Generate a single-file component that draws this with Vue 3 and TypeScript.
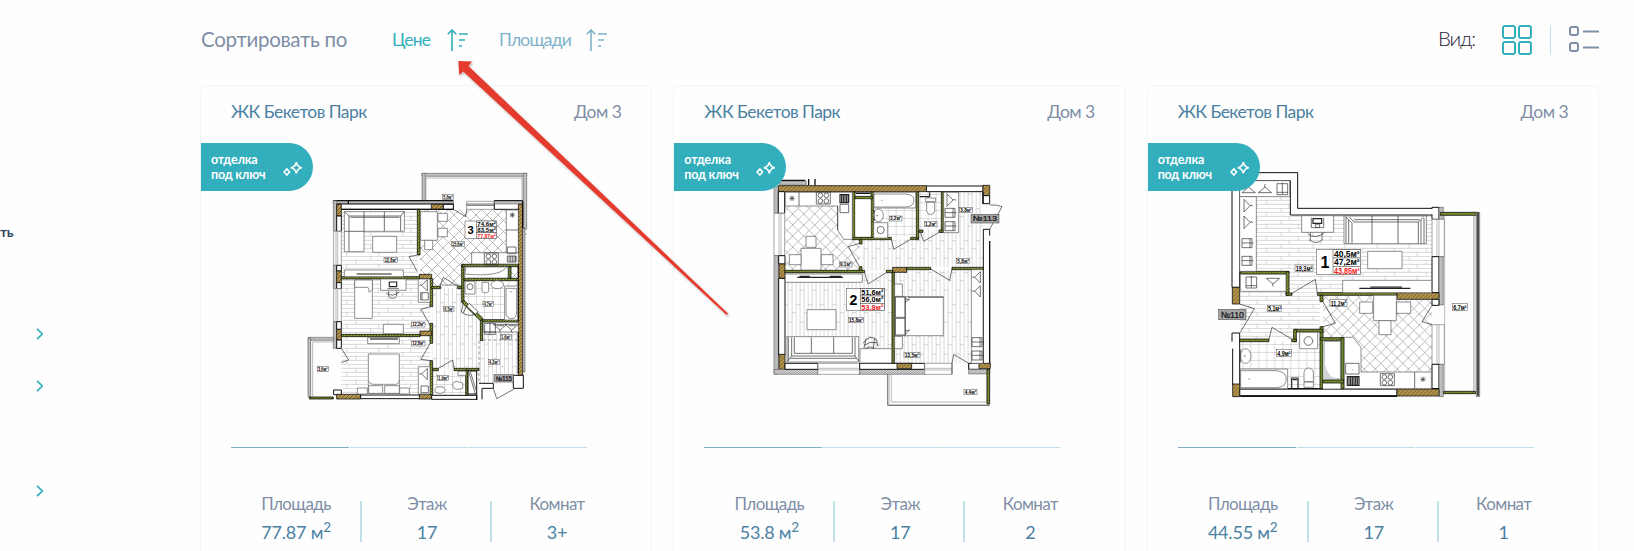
<script setup lang="ts">
type Shape = [kind: string, d: string]
interface Label { t: string; x: number; y: number; w: number; h?: number }
interface Summary { n: string; x: number; y: number; split: number; w: number; h: number; rows: string[] }
interface Plan { box: string; shapes: Shape[]; labels: Label[]; summary: Summary; door: Label }
interface Flat { id: number; area: string; floor: string; rooms: string; plan: Plan }

const fills: Record<string, string> = {
  plank: 'url(#p-plank)', plankv: 'url(#p-plankv)', diag: 'url(#p-diag)', tile: 'url(#p-tile)',
  gold: 'url(#p-gold)', green: 'url(#p-green)', insul: 'url(#p-insul)',
}

// Path builders; one drawing unit is a third of a pixel.
const r = (x1: number, y1: number, x2: number, y2: number) => `M${x1} ${y1}H${x2}V${y2}H${x1}Z`
const circle = (x: number, y: number, a: number, b = a) => `M${x - a} ${y}a${a} ${b} 0 1 0 ${2 * a} 0a${a} ${b} 0 1 0 ${-2 * a} 0Z`
const star = (x: number, y: number) => `M${x - 8} ${y}h16M${x} ${y - 8}v16M${x - 6} ${y - 6}l12 12M${x + 6} ${y - 6}l-12 12`
const hangRight = (x: number, y: number) => `M${x} ${y - 19}L${x + 18} ${y}L${x} ${y + 19}ZM${x + 18} ${y}q8 -5 8 2`
const hangLeft = (x: number, y: number) => `M${x} ${y - 17}L${x - 17} ${y}L${x} ${y + 17}ZM${x - 17} ${y}q-6 -5 -6 2`
const hangUp = (x: number, y: number) => `M${x - 20} ${y}L${x} ${y - 17}L${x + 20} ${y}ZM${x} ${y - 17}q-5 -7 2 -8`
const hangDown = (x: number, y: number) => `M${x - 20} ${y}L${x} ${y + 17}L${x + 20} ${y}ZM${x} ${y + 17}q-5 5 2 7`
const shirt = (x: number, y: number) => `${r(x, y, x + 30, y + 27)}M${x} ${y + 13}h34M${x + 24} ${y}v27`
const shirtUp = (x: number, y: number) => `${r(x, y, x + 32, y + 33)}M${x + 16} ${y - 3}v34M${x} ${y + 26}h32`
const stove = (x: number, y: number) => r(x, y, x + 42, y + 36) + circle(x + 12, y + 10, 7) + circle(x + 30, y + 10, 7) + circle(x + 12, y + 27, 7) + circle(x + 30, y + 27, 7)
const bars = (x1: number, y1: number, x2: number, y2: number) => {
  let d = r(x1, y1, x2, y2)
  for (let x = x1 + 5; x < x2; x += 5) d += `M${x} ${y1}V${y2}`
  return d
}

const planThree: Plan = {
  box: '-297 -51 1350 870',
  shapes: [
    ['plank', r(124, 148, 354, 350)], ['diag', r(360, 148, 655, 378)],
    ['plank', r(124, 357, 391, 523)], ['plank', r(124, 530, 391, 702)],
    ['plankv', 'M398 385H487V425L543 480V486H655V670H537V626H398Z'],
    ['tile', 'M492 363H655V479H545L492 428Z'], ['tile', r(398, 632, 498, 703)],
    ['insul', r(366, 40, 680, 49)], ['insul', r(366, 40, 376, 124)], ['insul', r(669, 40, 680, 205)],
    ['gray', 'M378 122V54H666V122M662 208h20M668 222h14'],
    ['insul', r(100, 122, 460, 132)], ['wall', r(110, 132, 460, 148)], ['gold', r(394, 133, 430, 148)], ['wall', r(430, 133, 460, 148)],
    ['thick', 'M100 122H460M112 148H460M145 122V132M583 122H667'],
    ['window', r(500, 124, 583, 148)], ['thin', 'M500 132H583M500 136H583'], ['wall', r(583, 123, 667, 148)], ['insul', r(583, 123, 667, 132)],
    ['insul', r(100, 122, 110, 213)], ['gold', r(110, 133, 124, 168)], ['wall', r(110, 168, 124, 214)],
    ['window', r(101, 214, 124, 316)], ['gray', 'M108 214V316M113 214V316'],
    ['insul', r(100, 316, 110, 385)], ['wall', r(110, 316, 124, 333)], ['gold', r(110, 333, 124, 368)], ['wall', r(110, 368, 124, 386)],
    ['window', r(101, 386, 124, 485)], ['gray', 'M108 386V485M113 386V485'],
    ['insul', r(100, 485, 110, 565)], ['wall', r(110, 485, 124, 508)], ['gold', r(110, 508, 124, 540)], ['wall', r(110, 540, 124, 565)],
    ['wall', r(101, 690, 124, 704)], ['gold', r(110, 703, 182, 717)], ['wall', r(182, 705, 360, 716)],
    ['gold', r(358, 703, 395, 717)], ['wall', r(395, 706, 530, 718)],
    ['gold', r(655, 133, 668, 646)], ['thick', 'M655 148V640M668 122V636'], ['insul', r(668, 205, 675, 636)],
    ['green', r(352, 148, 360, 285)], ['gold', r(358, 343, 395, 356)], ['green', r(124, 350, 358, 357)],
    ['green', r(390, 356, 398, 440)], ['green', r(390, 490, 398, 550)], ['gold', r(360, 513, 395, 527)], ['green', r(124, 523, 360, 530)],
    ['green', r(390, 602, 398, 705)], ['green', r(395, 379, 422, 386)], ['green', r(472, 379, 487, 386)],
    ['green', r(485, 313, 492, 427)], ['green', r(487, 313, 655, 320)], ['green', r(492, 355, 655, 362)], ['green', r(626, 320, 633, 355)],
    ['furn', r(494, 321, 624, 354)], ['furn', 'M494 354V342Q600 352 620 321M494 342L498 321M422 375H480'],
    ['green', 'M485 427L492 421L548 474V482H541Z'], ['white', 'M500 438L508 430L534 455L526 463Z'], ['thin', 'M500 438L508 430L534 455L526 463ZM490 458L500 438M484 456Q505 472 526 463M490 428L484 456'],
    ['green', r(545, 479, 655, 486)], ['green', r(541, 480, 548, 542)], ['dash', 'M548 540H655M537 542V670'],
    ['green', r(398, 625, 415, 632)], ['green', r(462, 625, 537, 632)], ['green', r(497, 630, 504, 705)],
    ['wall', r(504, 633, 530, 702)], ['thin', 'M506 635L526 702M511 635L528 690'],
    ['wall', 'M537 670H580V685H546V718'], ['wall', r(640, 646, 670, 685)],
    ['thin', 'M580 685L590 716L641 688'], ['thick', 'M530 703V720'],
    ['gray', 'M30 710V538H101M38 710V546H101'], ['insul', r(25, 532, 102, 541)], ['insul', r(24, 534, 32, 710)], ['green', r(28, 711, 100, 717)],
    ['thin', 'M124 565L146 600L124 608'],
    ['thin', 'M390 440L363 448L390 495M390 550L363 598L391 602M415 625L458 600L462 625M420 378L430 352L472 378M352 285L327 290L352 335M460 148L497 170L500 148'],
    // гостиная
    ['furn', 'M133 155H313V214H192V275H133Z'], ['thin', 'M147 168H302V214M147 168V275M133 214H192M192 155V214M253 155V214M147 168L133 155M302 168L313 155M151 172H298'],
    ['furn', r(218, 229, 290, 277)], ['furn', r(133, 330, 310, 350)], ['bold', 'M170 342H275'],
    // кухня
    ['furn', r(362, 155, 412, 241)], ['furn', r(414, 160, 442, 184)], ['furn', r(414, 205, 442, 230)], ['furn', r(374, 241, 398, 269)],
    ['furn', r(619, 150, 655, 312)], ['furn', r(515, 278, 655, 312)], ['thin', 'M619 210H655' + star(637, 165)], ['thin', stove(553, 279)],
    ['thin', r(622, 261, 648, 281)], ['thin', bars(622, 288, 648, 306)],
    // спальни
    ['furn', r(164, 360, 217, 475)], ['furn', 'M164 360H217V388L208 397L204 382H164Z'], ['furn', r(242, 357, 318, 391)],
    ['bold', r(268, 366, 290, 380)], ['thin', 'M262 386H297M259 400Q278 412 298 396M266 393V408M290 393V408M266 410Q278 420 290 410'],
    ['furn', r(355, 357, 390, 427)], ['thin', hangLeft(382, 376)], ['thin', r(362, 398, 385, 420) + 'M366 420V398'],
    ['furn', r(250, 493, 310, 521)], ['furn', r(203, 533, 298, 551)], ['bold', 'M210 537H294'],
    ['furn', r(172, 684, 202, 702)], ['furn', r(299, 684, 328, 702)], ['furn', r(205, 582, 298, 700)], ['furn', 'M205 662Q212 676 222 673H282Q294 676 298 660M206 677H248V700H206ZM254 677H298V700H254Z'],
    ['furn', r(355, 620, 390, 702)], ['thin', hangLeft(382, 642)], ['thin', r(363, 678, 385, 698)],
    // санузлы и гардероб
    ['furn', r(495, 364, 525, 402)], ['thin', circle(510, 380, 9)], ['furn', 'M546 367h20v28q-10 8 -20 0Z'], ['furn', circle(592, 374, 19, 12)], ['furn', r(614, 378, 653, 480)],
    ['furn', 'M618 385H650V455Q650 476 634 476Q618 476 618 455Z'], ['thin', 'M633 393V397'], ['furn', r(550, 487, 655, 516)],
    ['thin', shirtUp(554, 490) + hangDown(600, 493) + hangDown(635, 493) + 'M590 497H612M625 497H647'],
    ['furn', circle(420, 690, 16, 10)], ['furn', 'M458 675q0 -12 16 -10l14 4v16l-14 3q-16 0 -16 -13ZM474 634H498V646H474Z'],
  ],
  labels: [
    { t: '5,6м²', x: 428, y: 104, w: 32 }, { t: '12,8м²', x: 252, y: 293, w: 40 }, { t: '15,6м²', x: 454, y: 244, w: 39 },
    { t: '12,2м²', x: 335, y: 486, w: 40 }, { t: '12,8м²', x: 335, y: 543, w: 40 }, { t: '6,5м²', x: 431, y: 440, w: 31 },
    { t: '4,7м²', x: 549, y: 425, w: 31 }, { t: '1,6м²', x: 601, y: 524, w: 33 }, { t: '4,2м²', x: 565, y: 599, w: 33 },
    { t: '1,9м²', x: 412, y: 647, w: 34 }, { t: '3,6м²', x: 52, y: 619, w: 33 },
  ],
  summary: { n: '3', x: 495, y: 183, split: 529, w: 95, h: 53, rows: ['74,6м²', '83,5м²', '77,87м²'] },
  door: { t: '№115', x: 582, y: 644, w: 59, h: 22 },
}

const planTwo: Plan = {
  box: '-257 -81 1350 870',
  shapes: [
    ['diag', 'M76 108H234V180L252 208H300V300H76Z'], ['tile', r(341, 66, 470, 202)], ['tile', r(478, 66, 545, 187)],
    ['plankv', 'M551 66H670V292H441V302H308V208H477V187H551Z'], ['plankv', r(76, 309, 397, 580)], ['plankv', r(404, 299, 634, 580)],
    ['insul', r(60, 34, 140, 45)], ['thick', 'M62 31H137M147 27V46M166 27V46'],
    ['wall', r(500, 48, 670, 65)], ['gold', r(56, 47, 500, 65)], ['gold', r(670, 46, 690, 77)], ['wall', r(670, 77, 690, 101)],
    ['wall', 'M690 197V178H671V580'], ['thick', 'M690 213V580M670 66V102'],
    ['insul', r(43, 48, 55, 130)], ['wall', r(56, 65, 75, 130)], ['window', r(43, 130, 75, 257)], ['gray', 'M58 130V257M64 130V257'],
    ['insul', r(43, 257, 56, 612)], ['wall', r(57, 257, 76, 282)], ['gold', r(58, 282, 76, 325)], ['wall', r(57, 325, 76, 555)], ['gold', r(58, 553, 76, 598)],
    ['insul', r(43, 598, 175, 613)], ['wall', r(76, 580, 175, 598)], ['window', r(175, 580, 300, 613)], ['gray', 'M175 595H300M175 600H300'],
    ['insul', r(300, 598, 495, 613)], ['wall', r(300, 580, 495, 598)], ['gold', r(412, 580, 456, 596)], ['window', r(495, 580, 577, 613)], ['gray', 'M495 595H577M495 600H577'],
    ['wall', r(627, 580, 660, 598)], ['insul', r(627, 598, 690, 612)], ['gold', r(658, 580, 692, 596)],
    ['furn', 'M279 68H338V202H279Z'], ['green', r(278, 66, 286, 208)], ['green', r(334, 66, 341, 205)], ['green', r(286, 79, 338, 87)], ['thick', 'M288 70H332'],
    ['white', r(287, 88, 333, 201)],
    ['green', r(278, 202, 395, 209)], ['green', r(453, 202, 477, 209)], ['green', r(470, 66, 477, 205)], ['green', r(545, 66, 551, 187)],
    ['green', r(478, 180, 490, 187)], ['green', r(538, 180, 551, 187)], ['green', r(299, 208, 307, 222)], ['green', r(299, 290, 307, 304)],
    ['green', r(76, 301, 315, 308)], ['green', r(380, 301, 400, 308)], ['gold', r(399, 292, 441, 307)], ['green', r(441, 292, 513, 299)], ['green', r(577, 292, 671, 299)],
    ['green', r(397, 307, 404, 580)],
    ['gray', 'M388 613V705H690M395 613V696H682V600'], ['thin', 'M384 613V706H690'], ['green', r(682, 598, 690, 702)],
    ['thin', 'M690 105Q710 103 727 110L690 178M300 220L266 230L299 290M395 208L402 238L453 208M482 187L492 214L538 187M315 308L325 342L380 308M513 297L570 331L577 297M577 580L582 553L627 580V598M577 613V580'],
    // кухня
    ['furn', 'M77 67H278V208H252L234 180V108H77Z'], ['thin', 'M118 67V108M234 108V180' + star(97, 85)], ['thin', stove(170, 66)],
    ['bold', bars(241, 74, 267, 98)], ['thin', r(241, 103, 267, 128)], ['furn', r(124, 235, 184, 300)], ['furn', r(139, 199, 169, 232)], ['furn', r(89, 254, 124, 284)], ['furn', r(185, 254, 220, 284)],
    // санузел
    ['furn', r(342, 67, 468, 114)], ['furn', 'M343 72H440Q463 74 463 90Q463 109 440 111H343Z'], ['thin', 'M365 91h3'], ['furn', r(342, 158, 384, 204)], ['thin', circle(363, 180, 11)],
    ['furn', circle(356, 136, 15, 19)], ['thin', 'M344 120V153M350 137H355'], ['furn', 'M498 84H528V95H498ZM501 98q12 -4 24 0v25q-3 11 -12 11q-9 0 -12 -11Z'], ['bold', 'M480 80H510V67'],
    ['furn', r(552, 67, 597, 188)], ['thin', hangRight(562, 90)], ['thin', shirt(556, 115) + shirt(556, 155)],
    // гостиная
    ['furn', r(77, 312, 308, 337)], ['bold', 'M113 322H250M210 319H245M120 319H150'], ['furn', r(142, 419, 229, 479)],
    ['furn', r(82, 500, 297, 576)], ['thin', 'M86 502V572M96 502V558H286V502M104 502V550H278V502M155 502V550M222 502V550M96 558L82 576M286 558L297 574M92 565H290'],
    ['furn', r(301, 536, 396, 579)], ['thin', 'M310 520Q330 490 353 511M315 525Q330 513 351 518M320 505L313 534M345 503L341 535M317 535Q330 526 345 535M351 511L355 530'],
    // спальня
    ['furn', r(405, 342, 428, 379)], ['furn', r(405, 499, 428, 536)], ['furn', r(406, 380, 551, 497)],
    ['thin', 'M436 382V496M407 381H437V442H407ZM407 445H437V495H407ZM437 386L450 388L437 396M437 482L450 480L437 492M445 382H551'],
    ['furn', r(635, 299, 670, 580)], ['thin', hangLeft(662, 322) + hangLeft(662, 364) + shirt(637, 503) + shirt(637, 543)],
  ],
  labels: [
    { t: '3,2м²', x: 389, y: 138, w: 38 }, { t: '1,2м²', x: 494, y: 155, w: 38 }, { t: '3,8м²', x: 600, y: 113, w: 38 },
    { t: '9,1м²', x: 239, y: 276, w: 38 }, { t: '5,8м²', x: 591, y: 265, w: 39 }, { t: '15,8м²', x: 266, y: 443, w: 46 },
    { t: '13,5м²', x: 433, y: 547, w: 48 }, { t: '4,4м²', x: 613, y: 658, w: 39 },
  ],
  summary: { n: '2', x: 260, y: 356, split: 302, w: 114, h: 66, rows: ['51,6м²', '56,0м²', '53,8м²'] },
  door: { t: '№113', x: 634, y: 133, w: 84, h: 26 },
}

const planOne: Plan = {
  box: '-187 -51 1350 870',
  shapes: [
    ['plank', 'M88 62H240V165H665V398H236V335H88Z'], ['plank', 'M88 394H227V406H329V508H250V536H88Z'], ['diag', 'M338 406H665V685H452V565L428 533H338Z'], ['tile', r(88, 545, 329, 685)],
    ['wall', 'M65 38H262V145H665V165H240V62H88V382H65Z'], ['wall', r(665, 142, 686, 178)], ['insul', r(686, 142, 699, 178)], ['white', r(660, 147, 682, 163)],
    ['window', r(665, 178, 702, 290)], ['gray', 'M680 178V290M686 178V290'], ['wall', r(665, 290, 686, 398)], ['insul', r(686, 290, 699, 435)], ['gold', r(560, 398, 686, 418)],
    ['wall', r(665, 418, 686, 436)], ['window', r(665, 494, 702, 613)], ['gray', 'M680 494V613M686 494V613'], ['wall', r(665, 613, 686, 688)], ['insul', r(686, 613, 699, 710)],
    ['wall', r(88, 687, 560, 707)], ['thick', 'M88 686H686M90 709H560'], ['gold', r(560, 687, 686, 708)],
    ['gold', r(66, 382, 88, 432)], ['wall', 'M65 545V519H88V674H67V566'], ['gold', r(67, 672, 88, 710)],
    ['green', r(90, 334, 236, 342)], ['green', r(227, 335, 236, 406)], ['green', r(227, 399, 245, 406)], ['green', r(321, 398, 560, 406)],
    ['green', r(329, 406, 338, 425)], ['green', r(329, 500, 338, 686)], ['green', r(252, 508, 338, 516)], ['green', r(250, 508, 258, 545)],
    ['green', r(88, 537, 176, 545)], ['green', r(244, 537, 258, 545)],
    ['white', r(338, 533, 400, 686)], ['green', r(330, 533, 400, 541)], ['green', r(392, 533, 401, 686)], ['green', r(338, 660, 400, 669)], ['furn', r(341, 544, 390, 657)], ['grayfill', 'M341 590Q344 645 378 657H341Z'],
    ['green', r(690, 157, 800, 166)], ['insul', r(798, 157, 808, 710)], ['gray', 'M790 168V694M794 168V694M703 168V693'], ['green', r(700, 694, 796, 701)], ['thick', 'M803 157V708'],
    ['thin', 'M88 432L132 446L90 517M176 537L185 502L244 537M245 400L315 358L321 398M338 425L375 490L338 500M665 436L635 485L665 494'],
    // прихожая
    ['furn', r(88, 62, 238, 110)], ['furn', r(88, 110, 138, 334)], ['thin', hangUp(115, 98) + hangUp(164, 98) + shirtUp(200, 71)],
    ['thin', hangRight(101, 137) + hangRight(101, 187)], ['thin', shirt(95, 236) + shirt(95, 289)], ['furn', r(90, 343, 227, 394)], ['thin', shirtUp(107, 351) + hangDown(188, 355)],
    // гостиная
    ['furn', r(274, 167, 370, 217)], ['bold', r(308, 176, 334, 190)], ['thin', 'M303 173V203H340V173M315 193H328V202H315ZM292 221Q315 240 342 218M300 218V242M335 218V238M297 240Q318 256 338 238'],
    ['furn', r(401, 168, 648, 251)], ['thin', 'M407 171L425 190V250M417 171L431 186H624V250M640 171L624 186M485 168V250M563 168V250M407 171V250M415 180V250M632 180V250M641 174V250M431 179H628'],
    ['furn', r(472, 274, 575, 326)], ['furn', r(397, 361, 664, 398)], ['bold', 'M447 385H600M480 381H575'],
    // кухня
    ['furn', r(490, 406, 558, 482)], ['furn', r(448, 426, 487, 460)], ['furn', r(559, 426, 601, 460)], ['furn', r(506, 482, 542, 524)],
    ['furn', 'M402 532H428L452 562V636H663V686H402Z'], ['thin', 'M613 636V686' + star(638, 658)], ['thin', r(406, 610, 446, 642) + stove(510, 641) + 'M426 627v2'], ['bold', bars(411, 650, 446, 676)],
    // санузел
    ['furn', r(268, 517, 322, 566)], ['thin', circle(294, 543, 13)], ['furn', circle(106, 588, 16, 22)], ['thin', 'M91 568V608M100 588H106'], ['furn', r(90, 627, 232, 686)],
    ['furn', 'M91 632H200Q228 636 228 657Q228 680 200 683H91Z'], ['thin', 'M115 657h4'], ['furn', 'M281 665V637Q284 624 295 624Q306 624 309 637V665ZM281 666H309V682H281Z'], ['bold', 'M244 686V654H263V686M247 659H260'],
  ],
  labels: [
    { t: '19,3м²', x: 254, y: 315, w: 54, h: 20 }, { t: '5,1м²', x: 171, y: 436, w: 43, h: 19 }, { t: '11,2м²', x: 359, y: 418, w: 51, h: 21 },
    { t: '4,9м²', x: 199, y: 569, w: 44, h: 20 }, { t: '6,7м²', x: 727, y: 431, w: 44, h: 20 },
  ],
  summary: { n: '1', x: 319, y: 269, split: 368, w: 132, h: 75, rows: ['40,5м²', '47,2м²', '43,85м²'] },
  door: { t: '№110', x: 25, y: 448, w: 82, h: 31 },
}

const flats: Flat[] = [
  { id: 1, area: '77.87', floor: '17', rooms: '3+', plan: planThree },
  { id: 2, area: '53.8', floor: '17', rooms: '2', plan: planTwo },
  { id: 3, area: '44.55', floor: '17', rooms: '1', plan: planOne },
]
</script>

<template>
  <div class="page">
    <aside class="side">
      <span class="side-text">ть</span>
      <svg v-for="n in 3" :key="n" :class="['chev', 'chev-' + n]" width="8" height="12" viewBox="0 0 8 12"><path d="M1 .8 6.3 6 1 11.2" /></svg>
    </aside>

    <main class="main">
      <header class="bar">
        <span class="sort-title">Сортировать по</span>
        <a class="sort active"><span class="w-price">Цене</span>
          <svg width="21" height="22" viewBox="0 0 21 22"><path d="M5 22V1M.7 5.3 5 1l4.3 4.3M12 5h9M12 11h6M12 17h3" /></svg></a>
        <a class="sort"><span class="w-area">Площади</span>
          <svg width="21" height="22" viewBox="0 0 21 22"><path d="M5 22V1M.7 5.3 5 1l4.3 4.3M12 5h9M12 11h6M12 17h3" /></svg></a>
        <span class="view-title">Вид:</span>
        <svg class="ico-grid" width="30" height="30" viewBox="0 0 30 30"><g><rect x="1" y="1" width="12" height="12" rx="2" /><rect x="17" y="1" width="12" height="12" rx="2" /><rect x="1" y="17" width="12" height="12" rx="2" /><rect x="17" y="17" width="12" height="12" rx="2" /></g></svg>
        <i class="bar-line"></i>
        <svg class="ico-list" width="30" height="28" viewBox="0 0 30 28"><rect x="1" y="2" width="8" height="8" rx="2" /><rect x="1" y="18" width="8" height="8" rx="2" /><path d="M14 6.5h16M14 22.5h16" /></svg>
      </header>

      <section class="cards">
        <article v-for="f in flats" :key="f.id" class="card">
          <div class="head"><span class="name">ЖК Бекетов Парк</span><span class="house">Дом 3</span></div>
          <div class="media">
            <svg class="plan" width="450" height="290" :viewBox="f.plan.box">
              <path v-for="(s, i) in f.plan.shapes" :key="i" :class="s[0]" :d="s[1]" :fill="fills[s[0]]" />
              <g v-for="l in f.plan.labels" :key="l.x + '-' + l.y">
                <rect class="tag" :x="l.x" :y="l.y" :width="l.w" :height="l.h ?? 15" />
                <text class="tag-text" :x="l.x + 2" :y="l.y + (l.h ?? 15) - 2" :textLength="l.w - 4" lengthAdjust="spacingAndGlyphs" :font-size="(l.h ?? 15) + 1">{{ l.t }}</text>
              </g>
              <rect class="sum" :x="f.plan.summary.x" :y="f.plan.summary.y" :width="f.plan.summary.w" :height="f.plan.summary.h" />
              <text class="sum-num" :x="(f.plan.summary.x + f.plan.summary.split) / 2" :y="f.plan.summary.y + f.plan.summary.h * 0.72" :font-size="f.plan.summary.h * 0.64">{{ f.plan.summary.n }}</text>
              <g v-for="(row, i) in f.plan.summary.rows" :key="row">
                <rect class="sum" :x="f.plan.summary.split" :y="f.plan.summary.y + i * f.plan.summary.h / 3" :width="f.plan.summary.w + f.plan.summary.x - f.plan.summary.split" :height="f.plan.summary.h / 3" />
                <text :class="['sum-text', { red: i === 2 }]" :x="f.plan.summary.split + 3" :y="f.plan.summary.y + (i + 0.86) * f.plan.summary.h / 3" :textLength="f.plan.summary.w + f.plan.summary.x - f.plan.summary.split - 6" lengthAdjust="spacingAndGlyphs" :font-size="f.plan.summary.h / 3">{{ row }}</text>
              </g>
              <rect class="door" :x="f.plan.door.x" :y="f.plan.door.y" :width="f.plan.door.w" :height="f.plan.door.h" />
              <text class="door-text" :x="f.plan.door.x + 6" :y="f.plan.door.y + (f.plan.door.h ?? 20) * 0.82" :textLength="f.plan.door.w - 12" lengthAdjust="spacingAndGlyphs" :font-size="(f.plan.door.h ?? 20) * 0.87">{{ f.plan.door.t }}</text>
            </svg>
            <div class="badge">
              <span>отделка<br>под ключ</span>
              <svg width="20" height="15" viewBox="0 0 20 15"><path d="M13.3 1.2Q14.2 6 18.8 6.8Q14.2 7.6 13.3 12.4Q12.4 7.6 7.8 6.8Q12.4 6 13.3 1.2ZM3.8 7.9 6.6 11 3.8 14 1 11Z" /></svg>
            </div>
          </div>
          <div class="slides"><i class="on"></i><i></i><i></i></div>
          <dl class="stats">
            <div><dt>Площадь</dt><dd>{{ f.area }} м<sup>2</sup></dd></div>
            <div><dt>Этаж</dt><dd>{{ f.floor }}</dd></div>
            <div><dt>Комнат</dt><dd>{{ f.rooms }}</dd></div>
          </dl>
        </article>
      </section>
    </main>

    <svg class="pointer" width="1634" height="551" viewBox="0 0 1634 551">
      <defs>
        <pattern id="p-plank" width="96" height="36" patternUnits="userSpaceOnUse"><rect width="96" height="36" fill="#fff" /><path d="M0 1H96M0 13H96M0 25H96M20 1V13M72 13V25M44 25V37" stroke="#c0c0c0" stroke-width="2" fill="none" /></pattern>
        <pattern id="p-plankv" width="36" height="96" patternUnits="userSpaceOnUse"><rect width="36" height="96" fill="#fff" /><path d="M1 0V96M13 0V96M25 0V96M1 20H13M13 72H25M25 44H37" stroke="#c0c0c0" stroke-width="2" fill="none" /></pattern>
        <pattern id="p-diag" width="33" height="33" patternUnits="userSpaceOnUse"><rect width="33" height="33" fill="#fff" /><path d="M0 0L33 33M33 0L0 33" stroke="#999" stroke-width="2" /></pattern>
        <pattern id="p-tile" width="24" height="24" patternUnits="userSpaceOnUse"><rect width="24" height="24" fill="#fff" /><path d="M0 1H24M1 0V24" stroke="#c0c0c0" stroke-width="2" /></pattern>
        <pattern id="p-gold" width="12" height="12" patternUnits="userSpaceOnUse"><rect width="12" height="12" fill="#b3944e" /><path d="M-2 14L14 -2M-2 2L2 -2M10 14L14 10" stroke="#6d5620" stroke-width="2.5" /></pattern>
        <pattern id="p-green" width="9" height="9" patternUnits="userSpaceOnUse"><rect width="9" height="9" fill="#84a030" /><path d="M0 9L9 0" stroke="#2c3810" stroke-width="2" /></pattern>
        <pattern id="p-insul" width="8" height="8" patternUnits="userSpaceOnUse"><rect width="8" height="8" fill="#e4e4e4" /><path d="M0 0L8 8M8 0L0 8" stroke="#777" stroke-width="1.6" /></pattern>
        <filter id="soft" x="-5%" y="-5%" width="110%" height="110%"><feDropShadow dx="1" dy="1.5" stdDeviation="1" flood-opacity=".3" /></filter>
      </defs>
      <path filter="url(#soft)" fill="#e53b2e" d="M458.3 61 472 61.6 468.4 66 728 313.5 726.6 315 463.2 71.4 459.2 75Z" />
    </svg>
  </div>
</template>

<style>
html, body { margin: 0; background: #fefefe; overflow: hidden; }
</style>

<style scoped>
.page { position: relative; display: flex; width: 1634px; height: 551px; overflow: hidden; background: #fefefe; font-family: Lato, "Open Sans", sans-serif; }
.side { width: 200px; flex: none; display: flex; flex-direction: column; align-items: flex-start; }
.side-text { margin-top: 223px; height: 18px; line-height: 18px; font-size: 14px; font-weight: 700; color: #34495e; letter-spacing: -.5px; }
.chev { margin-left: 36px; fill: none; stroke: #33aebc; stroke-width: 1.7; }
.chev-1 { margin-top: 87px; }
.chev-2 { margin-top: 40px; }
.chev-3 { margin-top: 93px; }
.main { width: 1399px; flex: none; }
.bar { display: flex; height: 85px; align-items: flex-start; white-space: nowrap; }
.sort-title { width: 192px; padding-left: 1px; margin-top: 25px; line-height: 28px; font-size: 20.5px; color: #7e8ea6; letter-spacing: -.3px; }
.sort { display: flex; align-items: center; height: 28px; margin-top: 26px; font-size: 17.5px; color: #7fb2ca; letter-spacing: -.8px; }
.sort svg { fill: none; stroke: currentColor; stroke-width: 1.6; }
.sort span { margin-left: -1px; margin-top: -2px; }
.active { color: #33aebc; }
.w-price { width: 55px; }
.w-area { width: 87px; }
.active + .sort { margin-left: 32px; }
.view-title { margin-left: auto; width: 64px; margin-top: 24px; line-height: 28px; font-size: 20.5px; font-weight: 300; color: #291d38; letter-spacing: -1.1px; }
.ico-grid, .ico-list { fill: none; stroke-width: 2; margin-top: 25px; }
.ico-grid { stroke: #33aebc; }
.ico-list { stroke: #7e8ea6; }
.bar-line { width: 1px; height: 30px; margin: 25px 18px 0; background: #c2dfe9; }
.cards { display: grid; grid-template-columns: repeat(3, 1fr); gap: 21px; }
.card { height: 520px; box-sizing: border-box; border: 1px solid #edf6f7; border-radius: 8px; background: #fefefe; }
.head { display: flex; justify-content: space-between; height: 57px; padding: 0 30px; box-sizing: border-box; line-height: 52px; font-size: 17.5px; letter-spacing: -.55px; }
.name { color: #4a81a3; }
.house { color: #7e8ea6; }
.media { position: relative; height: 290px; }
.plan { display: block; }
.badge { position: absolute; left: 0; top: 0; width: 112px; height: 48px; box-sizing: border-box; padding: 0 10px 0 10px; border-radius: 0 24px 24px 0; background: #33aebc; color: #fff; display: flex; align-items: center; justify-content: space-between; font-size: 12.5px; line-height: 15px; font-weight: 700; letter-spacing: -.2px; white-space: nowrap; }
.badge svg { fill: none; stroke: #fff; stroke-width: 1.6; margin-top: 3px; }
.slides { display: grid; grid-template-columns: repeat(3, 118px); gap: 1px; margin: 14px 0 0 30px; height: 1px; }
.slides i { background: #c2dfe9; }
.slides .on { background: #7fb2ca; }
.stats { display: flex; margin: 45px 30px 0; text-align: center; }
.stats div { position: relative; width: 130px; height: 60px; flex: none; }
.stats div + div::before { content: ""; position: absolute; left: -1px; top: 8px; width: 2px; height: 41px; background: #c2dfe9; }
dt { margin-top: -2px; line-height: 26px; font-size: 17px; color: #7e8ea6; letter-spacing: -.6px; }
dd { margin: 2px 0 0; line-height: 26px; font-size: 18px; color: #4a81a3; letter-spacing: -.2px; }
.stats div:not(:first-child) dt, .stats div:not(:first-child) dd { padding-left: 2px; }
sup { font-size: 13.5px; line-height: 0; vertical-align: 7px; }
.pointer { position: absolute; left: 0; top: 0; pointer-events: none; }

.wall { fill: #fff; stroke: #111; stroke-width: 3; }
.gold, .green { stroke: #111; stroke-width: 2.4; }
.insul { stroke: #444; stroke-width: 1.5; }
.window { fill: #fff; stroke: #777; stroke-width: 2; }
.white { fill: #fff; }
.grayfill { fill: #d4d4d4; }
.gray { fill: none; stroke: #999; stroke-width: 2; }
.thin { fill: none; stroke: #2c2c2c; stroke-width: 2; }
.thick { fill: none; stroke: #111; stroke-width: 4; }
.bold { fill: none; stroke: #222; stroke-width: 3.5; }
.dash { fill: none; stroke: #666; stroke-width: 2; stroke-dasharray: 10 6; }
.furn { fill: #fff; stroke: #666; stroke-width: 2.2; }
.tag { fill: #fff; stroke: #333; stroke-width: 1.3; }
.sum { fill: #fff; stroke: #333; stroke-width: 1.4; }
.tag-text, .sum-text, .sum-num { font-family: "Liberation Sans", Arial, sans-serif; font-weight: 700; fill: #000; }
.sum-num { text-anchor: middle; }
.sum-text.red { fill: #f01820; }
.door { fill: #a5a5a5; stroke: #444; stroke-width: 1.6; }
.door-text { font-family: "Liberation Sans", Arial, sans-serif; fill: #111; stroke: #111; stroke-width: .7; }
</style>
